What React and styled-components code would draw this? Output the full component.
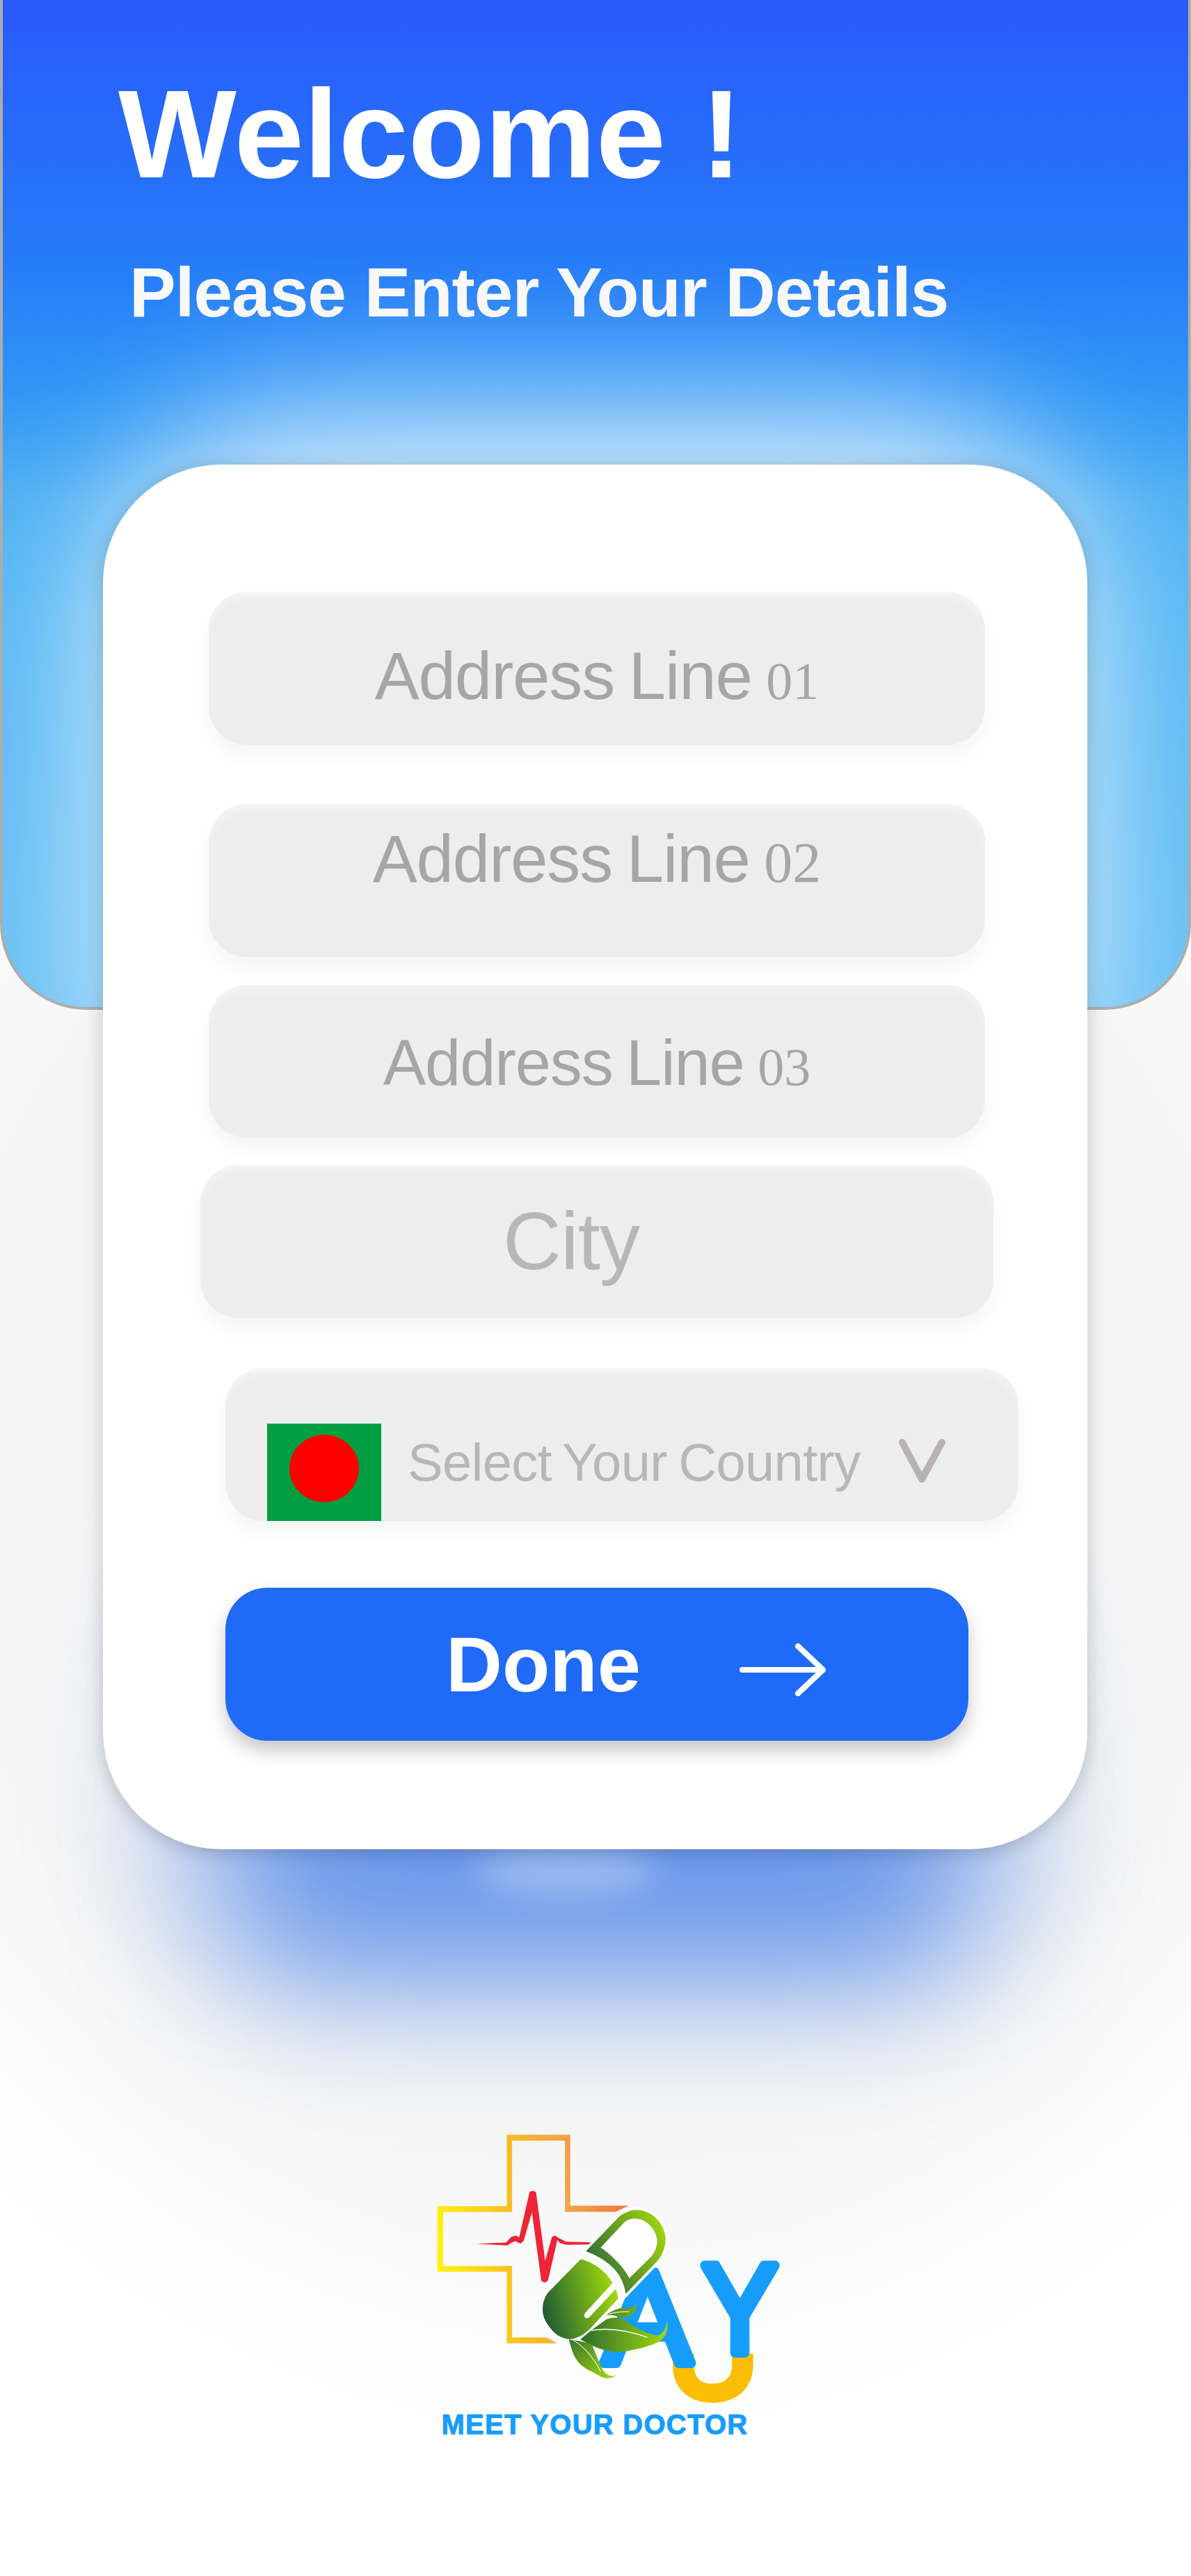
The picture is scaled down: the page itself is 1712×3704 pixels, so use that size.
import React from "react";
import styled, { createGlobalStyle } from "styled-components";

const GlobalStyle = createGlobalStyle`
  html, body {
    margin: 0;
    padding: 0;
    background: #fff;
  }
  * { box-sizing: border-box; }
`;

const Page = styled.div`
  position: relative;
  width: 1712px;
  height: 3704px;
  overflow: hidden;
  font-family: "Liberation Sans", Arial, sans-serif;
  background: radial-gradient(ellipse 1300px 1400px at 856px 2100px, #f5f5f5 70%, #ffffff 100%);
`;

const Header = styled.header`
  position: relative;
  height: 1452px;
  overflow: hidden;
  padding: 103px 0 0 166px;
  border: 4px solid #adadad;
  border-top: 0;
  border-radius: 0 0 124px 124px;
  background: linear-gradient(180deg, #2a5afc 0, #2579f8 360px, #3096f6 560px, #4fb0f3 720px, #56b7f5 870px, #68c0f6 1452px);
`;

// white haze that sits behind the card, clipped by the header
const Glow = styled.div`
  position: absolute;
  left: 128px;
  top: 585px;
  width: 1448px;
  height: 1100px;
  border-radius: 320px;
  background: rgba(255, 255, 255, 0.74);
  filter: blur(100px);
`;

const Title = styled.h1`
  position: relative;
  margin: 0;
  font-size: 180px;
  line-height: 1;
  font-weight: 700;
  color: #fff;
`;

const Subtitle = styled.h2`
  position: relative;
  margin: 87px 0 0 16px;
  font-size: 100px;
  line-height: 1;
  font-weight: 700;
  letter-spacing: -1px;
  color: #f8f8f8;
`;

const PaleHalo = styled.div`
  position: absolute;
  left: 170px;
  top: 2200px;
  width: 1370px;
  height: 640px;
  border-radius: 200px;
  background: rgba(107, 152, 234, 0.16);
  filter: blur(70px);
`;

const BlueHalo = styled.div`
  position: absolute;
  left: 320px;
  top: 2400px;
  width: 1080px;
  height: 450px;
  border-radius: 120px;
  background: #6b98ea;
  filter: blur(100px);
`;

const Card = styled.main`
  position: relative;
  z-index: 1;
  display: flex;
  flex-direction: column;
  width: 1415px;
  height: 1991px;
  margin: -784px 0 0 148px;
  padding-top: 183px;
  border-radius: 170px;
  background: #fff;
  box-shadow: 0 4px 28px rgba(0, 0, 0, 0.2);

  &::after {
    content: "";
    position: absolute;
    left: 535px;
    top: 100%;
    width: 260px;
    height: 66px;
    border-radius: 50%;
    background: rgba(255, 255, 255, 0.28);
    filter: blur(20px);
  }
`;

const Field = styled.div`
  display: flex;
  align-items: center;
  justify-content: center;
  width: ${(p) => p.$width || 1116}px;
  height: 220px;
  margin: ${(p) => p.$top}px 0 0 ${(p) => p.$left || 152}px;
  padding: ${(p) => p.$pad || "0"};
  border-radius: 55px;
  background: #ededed;
  box-shadow: 0 16px 24px rgba(0, 0, 0, 0.04), inset 0 10px 14px -4px rgba(255, 255, 255, 0.55);
`;

const FieldText = styled.span`
  font-size: ${(p) => p.$size}px;
  line-height: 1;
  letter-spacing: -1.1px;
  word-spacing: -5px;
  color: #a6a6a6;
  white-space: nowrap;
`;

const Digits = styled.span`
  font-family: "Liberation Serif", "Times New Roman", serif;
  font-size: ${(p) => p.$size}px;
  letter-spacing: 0;
`;

const CityText = styled.span`
  font-size: 116px;
  line-height: 1;
  letter-spacing: -1px;
  color: #b8b6b6;
`;

const SelectRow = styled.div`
  display: flex;
  align-items: center;
  width: 1140px;
  height: 220px;
  margin: 72px 0 0 176px;
  padding-left: 60px;
  border-radius: 55px;
  background: #ededed;
  box-shadow: 0 16px 24px rgba(0, 0, 0, 0.04), inset 0 10px 14px -4px rgba(255, 255, 255, 0.55);
`;

const Flag = styled.div`
  display: flex;
  align-items: center;
  justify-content: center;
  align-self: flex-end;
  width: 164px;
  height: 140px;
  padding-bottom: 12px;
  background: #009e40;
`;

const FlagDisc = styled.div`
  width: 100px;
  height: 97px;
  border-radius: 50%;
  background: #ff0000;
`;

const SelectText = styled.span`
  margin: 52px 0 0 38px;
  font-size: 76px;
  line-height: 1;
  letter-spacing: -0.7px;
  word-spacing: -4px;
  color: #b8b6b6;
  white-space: nowrap;
`;

const Chevron = styled.svg`
  margin: 48px 0 0 55px;
`;

const DoneButton = styled.button`
  display: flex;
  align-items: center;
  width: 1068px;
  height: 220px;
  margin: 96px 0 0 176px;
  padding: 0 0 0 317px;
  border: 0;
  border-radius: 60px;
  font-family: inherit;
  font-size: 112px;
  font-weight: 700;
  color: #fff;
  background: #1f6bf7;
  box-shadow: 0 14px 26px rgba(0, 0, 0, 0.22);
`;

const DoneArrow = styled.svg`
  margin: 16px 0 0 142px;
`;

const LogoWrap = styled.div`
  width: 540px;
  margin: 381px 0 0 600px;
`;

const fields = [
  { label: "Address Line", digits: "01", top: 0, pad: "22px 0 0 0", size: 96, digitSize: 76 },
  { label: "Address Line", digits: "02", top: 85, pad: "0 0 62px 0", size: 96, digitSize: 82 },
  { label: "Address Line", digits: "03", top: 40, pad: "4px 0 0 0", size: 92, digitSize: 76 },
];

function Logo() {
  return (
    <svg width="540" height="480" viewBox="0 0 1568 1394">
      <defs>
        <linearGradient id="cross" gradientUnits="userSpaceOnUse" x1="83" y1="520" x2="880" y2="420">
          <stop offset="0" stopColor="#fff20f" />
          <stop offset="0.38" stopColor="#f9c020" />
          <stop offset="0.7" stopColor="#f0a54a" />
          <stop offset="1" stopColor="#f4753a" />
        </linearGradient>
        <linearGradient id="capsule" gradientUnits="userSpaceOnUse" x1="720" y1="640" x2="1040" y2="480">
          <stop offset="0" stopColor="#2f6a3a" />
          <stop offset="1" stopColor="#a2d60c" />
        </linearGradient>
        <linearGradient id="capsuleLow" gradientUnits="userSpaceOnUse" x1="525" y1="840" x2="835" y2="760">
          <stop offset="0" stopColor="#1f5a35" />
          <stop offset="1" stopColor="#a0da0a" />
        </linearGradient>
        <linearGradient id="leaf" gradientUnits="userSpaceOnUse" x1="680" y1="900" x2="1040" y2="940">
          <stop offset="0" stopColor="#2b6a30" />
          <stop offset="1" stopColor="#a0d80c" />
        </linearGradient>
        <linearGradient id="leafLow" gradientUnits="userSpaceOnUse" x1="640" y1="950" x2="810" y2="1100">
          <stop offset="0" stopColor="#3d7a2a" />
          <stop offset="1" stopColor="#a0d80c" />
        </linearGradient>
        <clipPath id="uClip">
          <rect x="1000" y="1000" width="500" height="300" />
        </clipPath>
      </defs>

      <path
        fill="url(#cross)"
        d="M373 86H638V382L882 382L826 408H616V110H395V408H107V634H395V932H540L585 957H373V658H83V384H373Z"
      />
      <path
        fill="#ee2436"
        d="M245 541L370 536L392 512L410 507L425 513L468 325Q482 315 495 325L533 612L562 512L575 507L590 517L620 532L735 535L728 544L620 545L595 538L584 525L545 695Q530 710 517 695L478 410L443 530L430 540L408 530L395 536L375 548Z"
      />

      <g clipPath="url(#uClip)">
        <text x="1046" y="1178" fontFamily="Liberation Sans" fontSize="520" fill="#fcbd05" stroke="#fcbd05" strokeWidth="40" strokeLinejoin="round">U</text>
      </g>
      <text x="776" y="1040" fontFamily="Liberation Sans" fontSize="552" fill="#169dfc" stroke="#169dfc" strokeWidth="40" strokeLinejoin="round">A</text>
      <text transform="translate(1188 997) scale(0.9 1)" fontFamily="Liberation Sans" fontSize="528" fill="#169dfc" stroke="#169dfc" strokeWidth="40" strokeLinejoin="round">Y</text>

      <path
        fill="#fff"
        stroke="#fff"
        strokeWidth="22"
        d="M703 572L845 425Q885 398 915 399Q975 402 1010 450Q1040 490 1035 535Q1030 580 1000 615L870 750Q860 690 825 650Q780 600 703 572Z"
      />
      <path
        fill="url(#capsule)"
        fillRule="evenodd"
        d="M703 572L845 425Q885 398 915 399Q975 402 1010 450Q1040 490 1035 535Q1030 580 1000 615L870 750Q860 690 825 650Q780 600 703 572ZM765 557L865 450Q890 432 915 436Q955 440 980 475Q1005 510 1000 540Q995 575 975 595L885 685Q860 640 830 612Q800 580 765 557Z"
      />
      <path
        fill="#fff"
        stroke="#fff"
        strokeWidth="20"
        d="M682 605Q770 630 838 770L735 880Q690 935 635 940Q580 935 545 880Q515 840 525 790Q530 765 545 745Z"
      />
      <path
        fill="url(#capsuleLow)"
        d="M682 605Q770 630 815 705L700 830Q690 845 705 852Q715 853 725 840L828 730Q835 750 838 770L735 880Q690 935 635 940Q580 935 545 880Q515 840 525 790Q530 765 545 745Z"
      />

      <path fill="url(#leaf)" d="M790 838Q830 805 870 810Q895 815 915 790Q915 830 880 845Q850 855 820 840Z" />
      <path fill="url(#leaf)" d="M680 940Q720 905 770 870Q810 835 865 860Q930 910 1000 925Q1035 915 1043 860Q1050 920 1010 950Q960 975 860 992Q780 1000 680 940Z" />
      <path fill="none" stroke="#fff" strokeWidth="4" d="M725 903Q830 885 960 932" />
      <path fill="none" stroke="#e7f3c8" strokeWidth="3" d="M800 835Q840 822 885 825" />
      <path fill="url(#leafLow)" d="M632 942Q690 945 730 965Q750 1020 775 1070Q795 1100 830 1090Q800 1110 770 1098L700 1060Q660 1035 645 985Z" />
      <path fill="none" stroke="#fff" strokeWidth="3" d="M648 942Q720 985 765 1075" />

      <text x="100" y="1335" fontFamily="Liberation Sans" fontWeight="700" fontSize="116" letterSpacing="3.8" fill="#169dfc" stroke="#169dfc" strokeWidth="3" strokeLinejoin="round">MEET YOUR DOCTOR</text>
    </svg>
  );
}

export default function App() {
  return (
    <Page>
      <GlobalStyle />
      <Header>
        <Glow />
        <Title>Welcome !</Title>
        <Subtitle>Please Enter Your Details</Subtitle>
      </Header>
      <PaleHalo />
      <BlueHalo />
      <Card>
        {fields.map((f) => (
          <Field key={f.digits} $top={f.top} $pad={f.pad}>
            <FieldText $size={f.size}>
              {f.label} <Digits $size={f.digitSize}>{f.digits}</Digits>
            </FieldText>
          </Field>
        ))}
        <Field $top={39} $left={140} $width={1140} $pad="0 74px 0 0">
          <CityText>City</CityText>
        </Field>
        <SelectRow>
          <Flag>
            <FlagDisc />
          </Flag>
          <SelectText>Select Your Country</SelectText>
          <Chevron width="70" height="64" viewBox="0 0 70 64">
            <path d="M6 5L34 58L63 5" fill="none" stroke="#b8b2b2" strokeWidth="10" strokeLinecap="round" strokeLinejoin="round" />
          </Chevron>
        </SelectRow>
        <DoneButton>
          Done
          <DoneArrow width="124" height="76" viewBox="0 0 124 76">
            <path d="M4 38H120M84 4L120 38L84 72" fill="none" stroke="#fff" strokeWidth="8" strokeLinecap="round" strokeLinejoin="round" />
          </DoneArrow>
        </DoneButton>
      </Card>
      <LogoWrap>
        <Logo />
      </LogoWrap>
    </Page>
  );
}
